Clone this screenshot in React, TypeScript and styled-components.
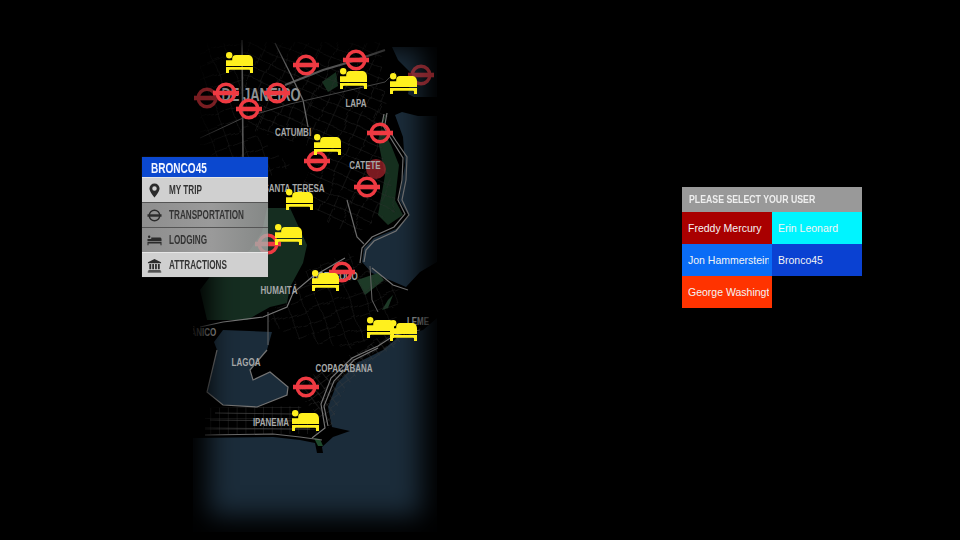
import styled, { createGlobalStyle } from 'styled-components';

const GlobalStyle = createGlobalStyle`
  html, body { margin: 0; padding: 0; background: #000; }
  body { font-family: "Liberation Sans", Arial, sans-serif; }
`;

const Page = styled.div`
  width: 960px;
  height: 540px;
  overflow: hidden;
  background: #000;
  display: flex;
  align-items: flex-start;
  padding: 33px 0 0 193px;
  box-sizing: border-box;
`;

const MapPanel = styled.div`
  position: relative;
  flex: none;
  width: 244px;
  height: 499px;
`;

const MapClip = styled.div`
  position: absolute;
  inset: 0;
  overflow: hidden;
`;

const MapArt = styled.svg`
  display: block;
  width: 100%;
  height: 100%;
`;

const EdgeFade = styled.div`
  position: absolute;
  inset: 0;
  box-shadow: inset 0 0 26px 16px #000;
  pointer-events: none;
`;

const PlaceLabel = styled.span<{ $size?: number }>`
  position: absolute;
  transform: translate(-50%, -50%) scaleX(${p => (p.$size ? 0.72 : 0.76)});
  font-size: ${p => p.$size ?? 10.5}px;
  font-weight: 700;
  color: ${p => (p.$size ? '#8f9294' : '#a6a8a8')};
  white-space: nowrap;
`;

const Pin = styled.svg<{ $dim?: boolean }>`
  position: absolute;
  overflow: visible;
  opacity: ${p => (p.$dim ? 0.5 : 1)};
`;

const Menu = styled.nav`
  position: absolute;
  left: -51px;
  top: 124px;
  width: 126px;
  box-shadow: 0 0 1px #333;
`;

const MenuTitle = styled.div`
  height: 20px;
  padding-left: 9px;
  background: #0b48cf;
  color: #f2f5ff;
  font-size: 15px;
  font-weight: 700;
  line-height: 21px;
`;

const Condensed = styled.span<{ $ratio: number }>`
  display: inline-block;
  white-space: nowrap;
  transform: scaleX(${p => p.$ratio});
  transform-origin: left center;
`;

const MenuRow = styled.div<{ $muted?: boolean }>`
  height: 25px;
  box-sizing: border-box;
  display: flex;
  align-items: center;
  gap: 7px;
  padding-left: 5px;
  border-top: 1px solid ${p => (p.$muted ? '#555' : '#e6e6e6')};
  background: ${p =>
    p.$muted
      ? 'linear-gradient(90deg, #8e8e8e 0%, #9a9a9a 55%, rgba(170, 174, 172, 0.78) 100%)'
      : '#d0d0d0'};
  color: #333;
  font-size: 12px;
  font-weight: 700;
`;

const MenuIcon = styled.svg`
  width: 15px;
  height: 15px;
  flex: none;
  fill: #2b2b2b;
`;

const UserPanel = styled.section`
  flex: none;
  width: 180px;
  margin: 154px 0 0 245px;
`;

const UserHeader = styled.div`
  height: 25px;
  padding-left: 7px;
  background: #999;
  color: #eee;
  font-size: 10px;
  font-weight: 700;
  line-height: 26px;
`;

const UserGrid = styled.div`
  display: grid;
  grid-template-columns: 90px 90px;
  grid-auto-rows: 32px;
`;

const UserCell = styled.div<{ $bg: string }>`
  padding: 0 3px 0 6px;
  background: ${p => p.$bg};
  color: #f4f4f4;
  font-size: 10.5px;
  line-height: 32px;
`;

const UserName = styled.div`
  overflow: hidden;
  white-space: nowrap;
`;

const labels: { text: string; x: number; y: number; size?: number }[] = [
  { text: 'DE JANEIRO', x: 261, y: 95, size: 18 },
  { text: 'LAPA', x: 356, y: 103 },
  { text: 'CATUMBI', x: 293, y: 132 },
  { text: 'CATETE', x: 365, y: 165 },
  { text: 'SANTA TERESA', x: 294, y: 188 },
  { text: 'HUMAITÁ', x: 279, y: 290 },
  { text: 'BOTAFOGO', x: 335, y: 276 },
  { text: 'LEME', x: 418, y: 321 },
  { text: 'BOTÂNICO', x: 195, y: 332 },
  { text: 'LAGOA', x: 246, y: 362 },
  { text: 'COPACABANA', x: 344, y: 368 },
  { text: 'IPANEMA', x: 271, y: 422 },
];

const roundels: { x: number; y: number; dim?: boolean }[] = [
  { x: 306, y: 65 },
  { x: 356, y: 60 },
  { x: 421, y: 75, dim: true },
  { x: 277, y: 93 },
  { x: 226, y: 93 },
  { x: 207, y: 98, dim: true },
  { x: 249, y: 109 },
  { x: 380, y: 133 },
  { x: 317, y: 161 },
  { x: 367, y: 187 },
  { x: 268, y: 244 },
  { x: 342, y: 272 },
  { x: 306, y: 387 },
];

const beds: { x: number; y: number }[] = [
  { x: 226, y: 52 },
  { x: 340, y: 68 },
  { x: 390, y: 73 },
  { x: 314, y: 134 },
  { x: 286, y: 189 },
  { x: 275, y: 224 },
  { x: 312, y: 270 },
  { x: 367, y: 317 },
  { x: 390, y: 320 },
  { x: 292, y: 410 },
];

const users = [
  { name: 'Freddy Mercury', color: '#a90000' },
  { name: 'Erin Leonard', color: '#00f4ff' },
  { name: 'Jon Hammerstein', color: '#0a6cf6' },
  { name: 'Bronco45', color: '#0a41d2' },
  { name: 'George Washington', color: '#ff3300' },
];

// panel origin in page coordinates, the pins and labels below are listed in page coordinates
const ORIGIN_X = 193;
const ORIGIN_Y = 33;

const LAND =
  '193,33 437,33 437,47 392,47 398,60 412,74 408,94 414,97 437,97 437,116 418,116 402,112 395,115 403,137 405,165 399,200 409,216 396,229 374,238 364,248 362,262 372,273 392,281 406,287 420,272 437,262 437,318 423,330 397,338 383,350 357,363 337,383 328,407 332,427 350,431 333,437 322,447 323,453 317,453 315,443 300,440 273,437 193,438';

const LAGOA =
  '217,350 207,392 223,405 257,407 287,395 288,387 270,372 253,380 250,370 267,350 272,332 223,330 214,342';

const PARK_MAIN =
  '267,208 290,208 307,245 303,263 290,287 287,303 270,307 247,320 207,320 200,290 215,270 235,262 250,250 262,232';

const STREET_AREAS = [
  { fill: 'url(#streetsA)', points: '240,42 380,42 388,110 382,150 398,205 355,235 330,225 300,190 320,150 250,130' },
  { fill: 'url(#streetsB)', points: '200,45 240,42 250,130 290,165 268,178 200,150' },
  { fill: 'url(#streetsB)', points: '285,285 345,250 400,290 395,325 350,350 300,340 270,325' },
  { fill: 'url(#streetsC)', points: '325,372 385,335 425,325 395,345 345,385 330,430 300,395 300,380' },
];

const MAJOR_ROADS = [
  { d: 'M285 85 323 70 350 62 385 50', w: 2, c: '#5a5a5a' },
  { d: 'M242 40 243 157', w: 1.6, c: '#555' },
  { d: 'M275 43 290 73 303 100 308 127', w: 1.3, c: '#666' },
  { d: 'M200 138 243 118 290 104 385 82 395 72', w: 0.9, c: '#4c4c4c' },
  { d: 'M347 200 357 237 364 244', w: 1.2, c: '#6b6b6b' },
  { d: 'M200 327 223 322 263 317 287 307 293 293 312 277 345 258', w: 1.2, c: '#777' },
  { d: 'M268 312 268 345', w: 1, c: '#666' },
  { d: 'M370 266 372 300 378 312', w: 1, c: '#666' },
  { d: 'M205 435 273 434 300 437 322 440', w: 1.2, c: '#6a6a6a' },
  { d: 'M215 413 295 414', w: 0.7, c: '#4a4a4a' },
  { d: 'M210 420 300 421', w: 0.7, c: '#4a4a4a' },
  { d: 'M205 428 310 429', w: 0.7, c: '#4a4a4a' },
];

const SHORE_ROADS = [
  'M387 113 385 124 396 141 407 157 406 180 402 200 409 215 396 231 374 241 366 250 364 262',
  'M384 114 382 124 393 142 403 158 402 180 398 200 405 214 394 227 372 237 362 248 360 263',
  'M372 268 393 285 408 290',
  'M378 348 354 360 334 381 324 406 328 426',
  'M420 330 395 335 378 346 352 358 331 378 321 404 325 428 312 438',
  'M217 350 207 392 223 405 257 407 287 395 288 387 270 372 253 380 250 370 267 350',
];

function Roundel({ x, y, dim }: { x: number; y: number; dim?: boolean }) {
  return (
    <Pin
      $dim={dim}
      width="26"
      height="22"
      viewBox="0 0 26 22"
      style={{ left: x - ORIGIN_X - 13, top: y - ORIGIN_Y - 11 }}
    >
      <circle cx="13" cy="11" r="8.8" fill="none" stroke="#ef3a42" strokeWidth="3.4" />
      <rect x="0" y="8.7" width="26" height="4.6" fill="#ef3a42" />
    </Pin>
  );
}

function Bed({ x, y }: { x: number; y: number }) {
  return (
    <Pin
      width="27"
      height="21"
      viewBox="0 0 27 21"
      style={{ left: x - ORIGIN_X, top: y - ORIGIN_Y }}
    >
      <circle cx="3.2" cy="3.2" r="3.2" fill="#fff01e" />
      <path d="M0 8.300h6.200V7C6.200 4.500 7.700 3 10 3h11.500C25 3 27 5 27 8.500V14H0z" fill="#fff01e" />
      <path d="M0 15h27v6h-3v-2.400c0-.6-.3-.9-.9-.9H3.900c-.6 0-.9.3-.9.9V21H0z" fill="#fff01e" />
    </Pin>
  );
}

function PinIcon() {
  return (
    <MenuIcon viewBox="0 0 16 16">
      <path
        fillRule="evenodd"
        d="M8 .5a5.4 5.4 0 0 0-5.4 5.4C2.600 9.500 8 15.500 8 15.500s5.400-6 5.400-9.600A5.400 5.400 0 0 0 8 .5zm0 7.700a2.400 2.400 0 1 1 0-4.800 2.400 2.400 0 0 1 0 4.800z"
      />
    </MenuIcon>
  );
}

function TransportIcon() {
  return (
    <MenuIcon viewBox="0 0 16 16">
      <circle cx="8" cy="8" r="5.600" fill="none" stroke="#2b2b2b" strokeWidth="1.500" />
      <rect x="0.500" y="6.700" width="15" height="2.600" />
    </MenuIcon>
  );
}

function LodgingIcon() {
  return (
    <MenuIcon viewBox="0 0 16 16">
      <circle cx="2.300" cy="4" r="1.300" />
      <path d="M.5 6.500h4V4.800h9c1.200 0 2 .7 2 1.900v1.800H.5zM.5 9.200h15V13h-1.100v-1.900H1.600V13H.5z" />
    </MenuIcon>
  );
}

function BankIcon() {
  return (
    <MenuIcon viewBox="0 0 16 16">
      <path d="M8 1 1 4.400v1.100h14V4.400zM2.500 6.500h2v5.500h-2zM5.600 6.500h1.900v5.500H5.600zM8.600 6.500h1.900v5.500H8.600zM11.600 6.500h2v5.500h-2zM1.500 13h13v1H1.500zM.8 14.500h14.400v1H.8z" />
    </MenuIcon>
  );
}

function StreetPattern({ id, angle, size, color }: { id: string; angle: number; size: number; color: string }) {
  return (
    <pattern
      id={id}
      width={size}
      height={size * 0.8}
      patternUnits="userSpaceOnUse"
      patternTransform={`rotate(${angle})`}
    >
      <path d={`M0 0H${size}M0 0V${size * 0.8}`} stroke={color} strokeWidth="0.7" fill="none" />
    </pattern>
  );
}

function CityMap() {
  return (
    <MapArt viewBox={`${ORIGIN_X} ${ORIGIN_Y} 244 499`}>
      <defs>
        <StreetPattern id="streetsA" angle={24} size={13} color="#2e2e2e" />
        <StreetPattern id="streetsB" angle={-20} size={15} color="#282828" />
        <StreetPattern id="streetsC" angle={-38} size={8} color="#3d3d3d" />
        <StreetPattern id="streetsD" angle={90} size={11} color="#3c3c3c" />
        {/* bends the street grids so they stop looking ruled */}
        <filter id="wobble" x="0" y="0" width="100%" height="100%">
          <feTurbulence type="fractalNoise" baseFrequency="0.045" numOctaves="2" seed="4" />
          <feDisplacementMap in="SourceGraphic" scale="9" />
        </filter>
      </defs>
      <rect x={ORIGIN_X} y={ORIGIN_Y} width="244" height="499" fill="#1b2c3a" />
      <polygon points={LAND} fill="#000" />
      <polygon points={LAGOA} fill="#1b2c3a" />
      <polygon points={PARK_MAIN} fill="#152d20" />
      <polygon points="387,112 380,125 391,145 399,165 395,200 403,215 388,225 378,215 385,175 378,140" fill="#16301f" />
      <polygon points="357,280 378,273 384,280 365,295" fill="#1d3a27" />
      <polygon points="322,82 336,72 338,86 328,92" fill="#16301f" />
      <polygon points="388,300 393,295 388,308 382,310" fill="#1d3a27" />
      <polygon points="314,438 320,439 323,446 318,446" fill="#1d4a2c" />
      <g filter="url(#wobble)">
        {STREET_AREAS.map(area => (
          <polygon key={area.points} points={area.points} fill={area.fill} />
        ))}
      </g>
      <polygon points="205,408 300,406 322,434 205,434" fill="url(#streetsD)" />
      {MAJOR_ROADS.map(road => (
        <path key={road.d} d={road.d} fill="none" stroke={road.c} strokeWidth={road.w} />
      ))}
      {SHORE_ROADS.map(d => (
        <path key={d} d={d} fill="none" stroke="#747474" strokeWidth="1.2" />
      ))}
      <circle cx="376" cy="169" r="10" fill="#a8242c" fillOpacity="0.72" />
    </MapArt>
  );
}

export default function App() {
  return (
    <>
      <GlobalStyle />
      <Page>
        <MapPanel>
          <MapClip>
            <CityMap />
            {labels.map(l => (
              <PlaceLabel
                key={l.text}
                $size={l.size}
                style={{ left: l.x - ORIGIN_X, top: l.y - ORIGIN_Y }}
              >
                {l.text}
              </PlaceLabel>
            ))}
            <EdgeFade />
            {roundels.map(r => (
              <Roundel key={`${r.x}-${r.y}`} {...r} />
            ))}
            {beds.map(b => (
              <Bed key={`${b.x}-${b.y}`} {...b} />
            ))}
          </MapClip>
          <Menu>
            <MenuTitle>
              <Condensed $ratio={0.67}>BRONCO45</Condensed>
            </MenuTitle>
            <MenuRow>
              <PinIcon />
              <Condensed $ratio={0.68}>MY TRIP</Condensed>
            </MenuRow>
            <MenuRow $muted>
              <TransportIcon />
              <Condensed $ratio={0.68}>TRANSPORTATION</Condensed>
            </MenuRow>
            <MenuRow $muted>
              <LodgingIcon />
              <Condensed $ratio={0.68}>LODGING</Condensed>
            </MenuRow>
            <MenuRow>
              <BankIcon />
              <Condensed $ratio={0.68}>ATTRACTIONS</Condensed>
            </MenuRow>
          </Menu>
        </MapPanel>
        <UserPanel>
          <UserHeader>
            <Condensed $ratio={0.875}>PLEASE SELECT YOUR USER</Condensed>
          </UserHeader>
          <UserGrid>
            {users.map(u => (
              <UserCell key={u.name} $bg={u.color}>
                <UserName>{u.name}</UserName>
              </UserCell>
            ))}
          </UserGrid>
        </UserPanel>
      </Page>
    </>
  );
}
